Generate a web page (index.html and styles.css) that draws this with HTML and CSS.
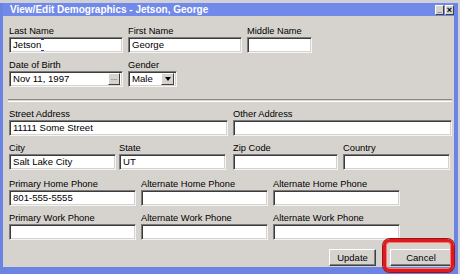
FILE: index.html
```html
<!DOCTYPE html>
<html lang="en">
<head>
    <meta charset="UTF-8">
    <title>View/Edit Demographics</title>
    <link rel="stylesheet" href="styles.css">
</head>
<body>

<div class="window">
    <div class="titlebar">
        <span class="title">View/Edit Demographics - Jetson, George</span>
        <div class="tb-buttons">
            <span class="tb-btn">_</span>
            <span class="tb-btn close">&#215;</span>
        </div>
    </div>

    <div class="content">
        <div class="row">
            <div class="field w114"><label>Last Name</label><div class="input">Jetson<span class="ibeam"></span></div></div>
            <div class="field w114"><label>First Name</label><div class="input">George</div></div>
            <div class="field w65"><label>Middle Name</label><div class="input"></div></div>
        </div>
        <div class="row">
            <div class="field w114">
                <label>Date of Birth</label>
                <div class="input with-btn">
                    <span class="value">Nov 11, 1997</span>
                    <span class="mini-btn">...</span>
                </div>
            </div>
            <div class="field w49">
                <label>Gender</label>
                <div class="input with-btn">
                    <span class="value">Male</span>
                    <span class="mini-btn drop"><span class="arrow"></span></span>
                </div>
            </div>
        </div>

        <div class="separator"></div>

        <div class="row">
            <div class="field w219"><label>Street Address</label><div class="input">11111 Some Street</div></div>
            <div class="field w219"><label>Other Address</label><div class="input"></div></div>
        </div>
        <div class="row row-city">
            <div class="field w107"><label>City</label><div class="input">Salt Lake City</div></div>
            <div class="field w107 state"><label>State</label><div class="input">UT</div></div>
            <div class="field w105 zip"><label>Zip Code</label><div class="input"></div></div>
            <div class="field w107"><label>Country</label><div class="input"></div></div>
        </div>
        <div class="row">
            <div class="field w127"><label>Primary Home Phone</label><div class="input">801-555-5555</div></div>
            <div class="field w127"><label>Alternate Home Phone</label><div class="input"></div></div>
            <div class="field w127"><label>Alternate Home Phone</label><div class="input"></div></div>
        </div>
        <div class="row">
            <div class="field w127"><label>Primary Work Phone</label><div class="input"></div></div>
            <div class="field w127"><label>Alternate Work Phone</label><div class="input"></div></div>
            <div class="field w127"><label>Alternate Work Phone</label><div class="input"></div></div>
        </div>

        <div class="actions">
            <button type="button" class="btn update">Update</button>
            <button type="button" class="btn cancel">Cancel</button>
        </div>

        <div class="highlight"></div>
    </div>
</div>

</body>
</html>
```

FILE: styles.css
```css
body {
    margin: 0;
    padding-top: 3px;
    background-color: #cfd1d6;
    font-family: "Liberation Sans", Arial, sans-serif;
    font-size: 9.3px;
    color: #000;
}
.window {
    width: 458px;
    box-sizing: border-box;
    border: 3px solid #6b83e2;
    border-top: 0;
    border-right-width: 4px;
    border-bottom-width: 7px;
    background-color: #d6d3ce;
}
.titlebar {
    height: 13px;
    background-color: #7189e8;
    display: flex;
    align-items: center;
    justify-content: space-between;
    padding-left: 7px;
}
.title {
    color: #fff;
    font-weight: bold;
    font-size: 10px;
    line-height: 13px;
}
.tb-buttons {
    display: flex;
    gap: 1px;
}
.tb-btn {
    width: 9px;
    height: 10px;
    box-sizing: border-box;
    background-color: #d6d3ce;
    border: 1px solid;
    border-color: #fff #404040 #404040 #fff;
    font-size: 8px;
    line-height: 7px;
    text-align: center;
    color: #000;
    font-weight: bold;
}
.tb-btn.close {
    font-size: 9px;
    line-height: 8px;
}

.content {
    position: relative;
    height: 251px;
    box-sizing: border-box;
    padding: 9px 2px 0 6px;
}
.row {
    display: flex;
    gap: 5px;
    margin-bottom: 6px;
}
.row-city {
    gap: 3px;
    margin-bottom: 8px;
}
.row-city .zip {
    margin-left: 4px;
    margin-right: 2px;
}
.field label {
    display: block;
    height: 12px;
    line-height: 12px;
    white-space: nowrap;
}
.w49 { width: 49px; }
.w65 { width: 65px; }
.w105 { width: 105px; }
.w107 { width: 107px; }
.w114 { width: 114px; }
.w127 { width: 127px; }
.w219 { width: 219px; }

.input {
    height: 16px;
    box-sizing: border-box;
    background-color: #fff;
    border: 1px solid;
    border-color: #7a7a7a #f4f4f4 #f4f4f4 #7a7a7a;
    box-shadow: inset 1px 1px 0 #3c3c3c, inset -1px -1px 0 #d6d3ce;
    padding: 0 3px;
    font-size: 9.6px;
    line-height: 14px;
    white-space: nowrap;
    overflow: hidden;
}
.ibeam {
    display: inline-block;
    width: 3px;
    height: 12px;
    vertical-align: -3px;
    box-sizing: border-box;
    border-top: 1px solid #2a3cd8;
    border-bottom: 1px solid #2a3cd8;
}
.with-btn {
    display: flex;
    align-items: center;
    justify-content: space-between;
    padding-right: 2px;
}
.mini-btn {
    width: 12px;
    height: 12px;
    box-sizing: border-box;
    background-color: #d6d3ce;
    border: 1px solid;
    border-color: #fff #404040 #404040 #fff;
    font-size: 8px;
    line-height: 7px;
    text-align: center;
    color: #333;
}
.mini-btn.drop {
    width: 13px;
    display: flex;
    align-items: center;
    justify-content: center;
}
.arrow {
    width: 0;
    height: 0;
    border-left: 3.5px solid transparent;
    border-right: 3.5px solid transparent;
    border-top: 4px solid #000;
}

.separator {
    height: 1px;
    margin: 12px 0 6px -1px;
    border-top: 1px solid #8c8a86;
    border-bottom: 1px solid #fff;
}

.actions {
    display: flex;
    justify-content: flex-end;
    gap: 14px;
    margin-top: 9px;
}
.btn {
    height: 17px;
    box-sizing: border-box;
    background-color: #d6d3ce;
    border: 1px solid;
    border-color: #fff #404040 #404040 #fff;
    box-shadow: inset -1px -1px 0 #808080;
    font-family: "Liberation Sans", Arial, sans-serif;
    font-size: 9.5px;
    padding: 0;
    color: #000;
}
.update { width: 47px; }
.cancel { width: 62px; }

.highlight {
    position: absolute;
    left: 380px;
    top: 223px;
    width: 71px;
    height: 33px;
    box-sizing: border-box;
    border: 3px solid #e01a1a;
    border-radius: 7px;
    box-shadow: 0 0 0 1px #a01212, inset 0 0 0 1px #f27a7a;
}
```
